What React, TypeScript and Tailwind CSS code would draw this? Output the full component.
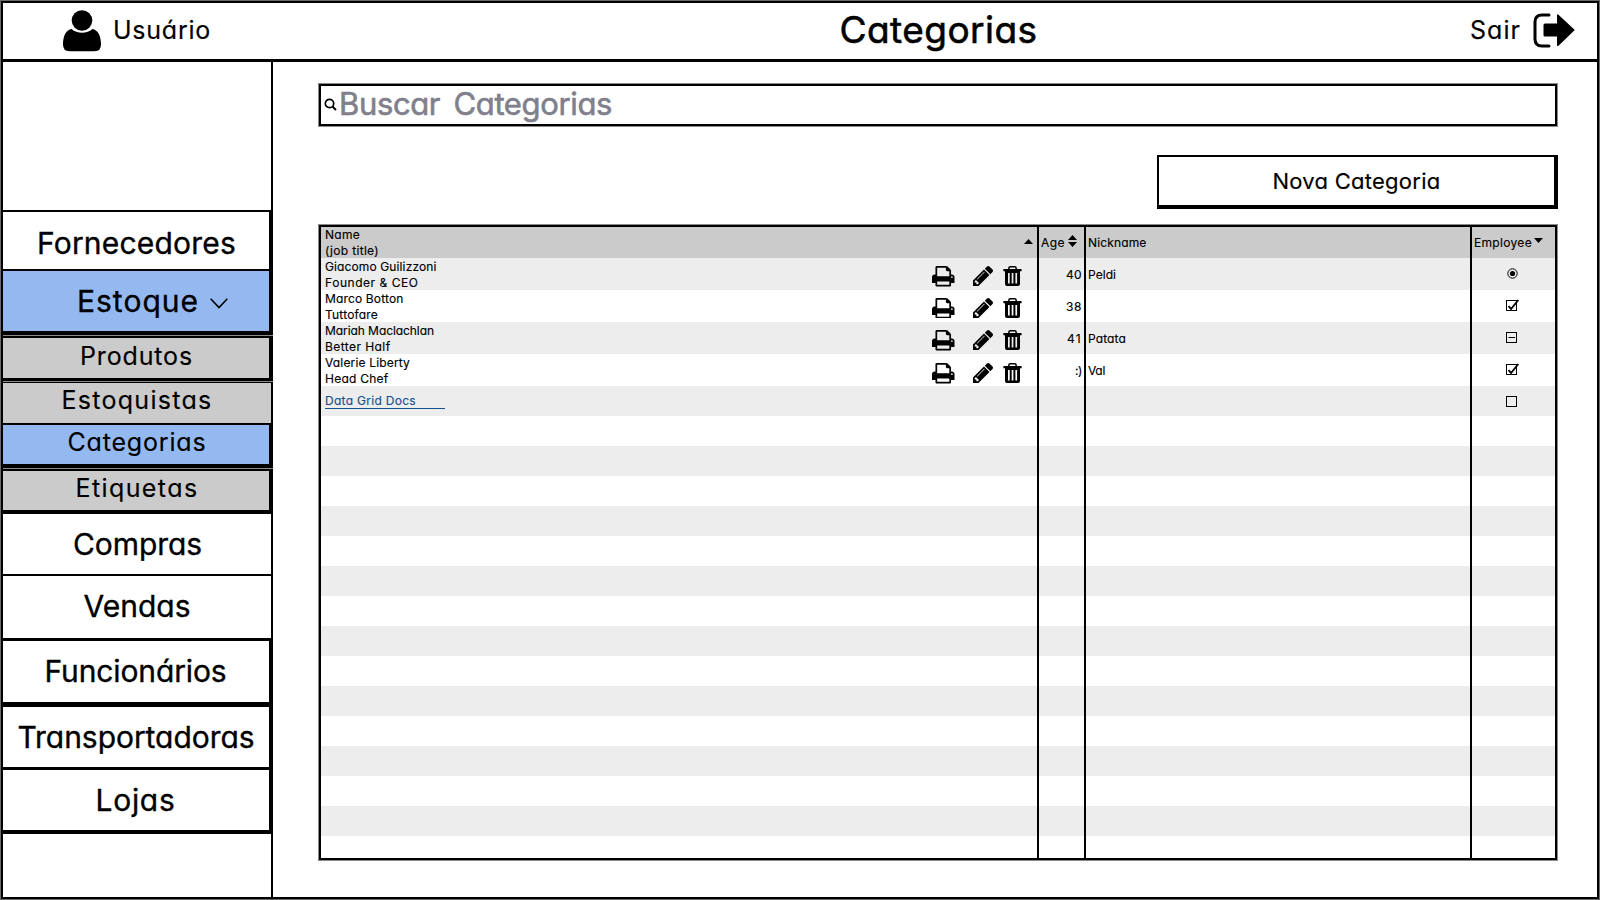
import { useLayoutEffect, useRef, useState } from "react";
import type { ReactNode } from "react";

type FitProps = { text: string; width: number; className?: string };

/** One line of text whose tracking is adjusted so that it spans `width` pixels. */
function Fit({ text, width, className = "" }: FitProps) {
  const ref = useRef<HTMLSpanElement>(null);
  const [spacing, setSpacing] = useState(0);
  useLayoutEffect(() => {
    const el = ref.current;
    if (!el) return;
    const natural = el.getBoundingClientRect().width - spacing * text.length;
    setSpacing((width - natural) / text.length);
  }, [text, width]);
  return (
    <span ref={ref} className={`inline-block whitespace-pre ${className}`} style={{ letterSpacing: `${spacing}px` }}>
      {text}
    </span>
  );
}

const PRINT =
  "M448 1536h896v-256h-896v256zm0-640h896v-384h-160q-40 0-68-28t-28-68v-160h-640v640zm1152 64q0-26-19-45t-45-19-45 19-19 45 19 45 45 19 45-19 19-45zm128 0v416q0 13-9.5 22.5t-22.5 9.5h-224v160q0 40-28 68t-68 28h-960q-40 0-68-28t-28-68v-160h-224q-13 0-22.5-9.5t-9.5-22.5v-416q0-79 56.5-135.5t135.5-56.5h64v-544q0-40 28-68t68-28h672q40 0 88 20t76 48l152 152q28 28 48 76t20 88v256h64q79 0 135.5 56.5t56.5 135.5z";
const PENCIL =
  "M491 1536l91-91-235-235-91 91v107h128v128h107zm523-928q0-22-22-22-10 0-17 7l-542 542q-7 7-7 17 0 22 22 22 10 0 17-7l542-542q7-7 7-17zm-54-192l416 416-832 832h-416v-416zm683 96q0 53-37 90l-166 166-416-416 166-165q36-38 90-38 53 0 91 38l235 234q37 39 37 91z";

function PrintIcon() {
  return (
    <svg className="h-[20.5px] w-[22.5px]" viewBox="64 128 1664 1536" preserveAspectRatio="none">
      <path d={PRINT} />
    </svg>
  );
}

function PencilIcon() {
  return (
    <svg className="size-5" viewBox="128 149 1515 1515">
      <path d={PENCIL} />
    </svg>
  );
}

function TrashIcon() {
  return (
    <svg className="h-5 w-[19px]" viewBox="0 0 19 20">
      <path d="M5.8 3.6V2.4Q5.8.8 7.4.8h4.2q1.6 0 1.6 1.6v1.2" fill="none" stroke="#000" strokeWidth="1.5" />
      <path d="M1 3h17q.6 0 .6.6v1.6H.4V3.600Q.4 3 1 3z" />
      <path
        fillRule="evenodd"
        d="M2 5h15v13q0 2-2 2H4q-2 0-2-2zM5 7v10.500h1.700V7zM8.700 7v10.500h1.700V7zM12.400 7v10.500h1.700V7z"
      />
    </svg>
  );
}

function UserIcon() {
  return (
    <svg className="h-[42px] w-[38px]" viewBox="0 0 38 42">
      <circle cx="19" cy="10.500" r="10.300" />
      <path d="M8.500 19Q13 22.800 19 22.800T29.500 19C35 20 38 26 38 34.500Q38 41.300 31.500 41.300h-25Q0 41.300 0 34.500C0 26 3 20 8.500 19z" />
    </svg>
  );
}

function ExitIcon() {
  return (
    <svg className="mb-px h-[35px] w-[43px]" viewBox="0 0 43 35">
      <path d="M16 2H9Q2 2 2 9v17q0 7 7 7h7" fill="none" stroke="#000" strokeWidth="3" strokeLinecap="round" />
      <path d="M12 10.500h12V2.500q0-2 1.500-.7L41.800 17 25.500 32.800q-1.500 1-1.500-.8v-8.500H12q-1.500 0-1.500-1.500V12q0-1.500 1.500-1.500z" />
    </svg>
  );
}

function Up({ className = "" }: { className?: string }) {
  return (
    <svg className={`h-[5px] w-[9px] ${className}`} viewBox="0 0 9 5">
      <path d="M4.500 0 9 5H0z" />
    </svg>
  );
}

function Down({ className = "" }: { className?: string }) {
  return (
    <svg className={`h-[5px] w-[9px] ${className}`} viewBox="0 0 9 5">
      <path d="M4.500 5 9 0H0z" />
    </svg>
  );
}

type Mark = "radio" | "check" | "minus" | "empty";

function Marker({ mark }: { mark: Mark }) {
  return (
    <svg className="h-[14px] w-[14px]" viewBox="0 0 14 14" fill="none" stroke="#000">
      {mark === "radio" ? (
        <>
          <circle cx="6.500" cy="6.500" r="4.700" />
          <circle cx="6.500" cy="6.500" r="2.600" fill="#000" stroke="none" />
        </>
      ) : (
        <rect x="0.500" y="1.500" width="10" height="10" />
      )}
      {mark === "minus" && <path d="M2.500 6.500h6.500" />}
      {mark === "check" && <path d="M2.500 7 5 10 12.300 1" strokeWidth="1.900" />}
    </svg>
  );
}

type NavItem = { label: string; width: number; box: string; text: string; open?: boolean };

const main = "text-[30px] [-webkit-text-stroke:0.35px_black]";
const sub = "text-[25px] [-webkit-text-stroke:0.15px_black]";

const nav: NavItem[] = [
  { label: "Fornecedores", width: 199, box: "h-[59px] border-r-4 border-b-2 bg-white pt-[5px]", text: main },
  { label: "Estoque", width: 122, box: "h-[64px] border-r-4 border-b-4 bg-[#94b9f1] pl-[25px]", text: main, open: true },
  { label: "Produtos", width: 113, box: "mt-px h-[45px] border-t-2 border-r-4 border-b-3 bg-[#cbcbcb] pb-[3px]", text: sub },
  { label: "Estoquistas", width: 151, box: "mt-px h-[43px] border-t border-b-2 border-r-2 bg-[#cbcbcb] pr-px pb-1", text: sub },
  { label: "Categorias", width: 139, box: "h-[43px] border-r-4 border-b-4 bg-[#94b9f1] pb-[4px] pl-px", text: sub },
  { label: "Etiquetas", width: 123, box: "mt-px h-[45px] border-t-2 border-r-4 border-b-4 bg-[#cbcbcb] pb-[4px] pl-px", text: sub },
  { label: "Compras", width: 129, box: "h-[62px] border-r-2 border-b-2 bg-white", text: main },
  { label: "Vendas", width: 107, box: "h-[65px] border-r-2 border-b-3 bg-white pr-px pb-px", text: main },
  { label: "Funcionários", width: 182, box: "h-[66px] border-r-4 border-b-5 bg-white pr-[2px]", text: main },
  { label: "Transportadoras", width: 237, box: "h-[63px] border-r-4 border-b-3 bg-white pr-px", text: main },
  { label: "Lojas", width: 80, box: "h-[64px] border-r-4 border-b-4 bg-white pr-[2px]", text: main },
];

type Row = {
  name: [string, number];
  job: [string, number];
  age: [string, number];
  nick?: [string, number];
  mark: Mark;
  icons: string;
};

const rows: Row[] = [
  { name: ["Giacomo Guilizzoni", 111.5], job: ["Founder & CEO", 93.5], age: ["40", 16], nick: ["Peldi", 28], mark: "radio", icons: "pt-2" },
  { name: ["Marco Botton", 78.5], job: ["Tuttofare", 53], age: ["38", 16], mark: "check", icons: "pt-[7.5px]" },
  { name: ["Mariah Maclachlan", 109], job: ["Better Half", 65.5], age: ["41", 15], nick: ["Patata", 38], mark: "minus", icons: "pt-2" },
  { name: ["Valerie Liberty", 85], job: ["Head Chef", 63.5], age: [":)", 7], nick: ["Val", 17], mark: "check", icons: "pt-[9px]" },
];

const columns = "grid grid-cols-[716px_47px_386px_85px]";

function Cell({ children, className = "" }: { children?: ReactNode; className?: string }) {
  return <div className={`flex border-l-2 border-black ${className}`}>{children}</div>;
}

function DataGrid() {
  return (
    <div className="mx-px flex h-[635px] w-[1238px] flex-col border-2 border-black text-xs shadow-[0_0_0_1px_#8a8a8a] [-webkit-text-stroke:0.15px]">
      <div className={`${columns} h-[31px] shrink-0 bg-[#cbcbcb]`}>
        <div className="flex items-center justify-between pr-1 pl-1">
          <div className="flex flex-col items-start leading-4">
            <Fit text="Name" width={35} />
            <Fit text="(job title)" width={54} />
          </div>
          <Up className="mb-[3px]" />
        </div>
        <Cell className="items-center pl-0.5">
          <Fit text="Age" width={24} />
          <div className="mb-[5px] ml-[3px] flex flex-col gap-0.5">
            <Up />
            <Down />
          </div>
        </Cell>
        <Cell className="items-center pl-0.5">
          <Fit text="Nickname" width={58.5} />
        </Cell>
        <Cell className="items-center pl-0.5">
          <Fit text="Employee" width={58} />
          <Down className="mb-[5px] ml-0.5" />
        </Cell>
      </div>

      {rows.map((row) => (
        <div key={row.name[0]} className={`${columns} h-8 shrink-0 odd:bg-white even:bg-[#ededed]`}>
          <div className="flex justify-between pr-[15.500px] pl-1">
            <div className="flex flex-col items-start pt-px leading-4">
              <Fit text={row.name[0]} width={row.name[1]} />
              <Fit text={row.job[0]} width={row.job[1]} />
            </div>
            <div className={`flex items-start ${row.icons}`}>
              <PrintIcon />
              <span className="w-[18.500px]" />
              <PencilIcon />
              <span className="w-[9.500px]" />
              <TrashIcon />
            </div>
          </div>
          <Cell className="items-start justify-end pt-2 pr-0.5 leading-4">
            <Fit text={row.age[0]} width={row.age[1]} className="mt-px" />
          </Cell>
          <Cell className="items-start pt-2 pl-0.5 leading-4">
            {row.nick && <Fit text={row.nick[0]} width={row.nick[1]} className="mt-px" />}
          </Cell>
          <Cell className="items-start pt-[9px] pl-[34px]">
            <Marker mark={row.mark} />
          </Cell>
        </div>
      ))}

      <div className={`${columns} h-[30px] shrink-0 bg-[#ededed]`}>
        <div className="flex items-center pb-px pl-1">
          <a className="flex h-[17px] w-[120px] items-start border-b border-[#15518f] text-[#15518f]">
            <Fit text="Data Grid Docs" width={91} className="mt-px leading-4" />
          </a>
        </div>
        <Cell />
        <Cell />
        <Cell className="items-center pt-0.5 pl-[34px]">
          <Marker mark="empty" />
        </Cell>
      </div>

      {Array.from({ length: 14 }, (_, i) => (
        <div key={i} className={`${columns} h-[30px] shrink-0 ${i % 2 ? "bg-[#ededed]" : "bg-white"}`}>
          <div />
          <Cell />
          <Cell />
          <Cell />
        </div>
      ))}
      <div className={`${columns} flex-1 bg-white`}>
        <div />
        <Cell />
        <Cell />
        <Cell />
      </div>
    </div>
  );
}

export default function App() {
  return (
    <div className="h-[900px] w-[1600px] overflow-hidden bg-[#6b6b6b] p-px font-['Inter','Liberation_Sans',sans-serif] text-black [font-feature-settings:'cv11']">
      <div className="flex h-full w-full flex-col border-2 border-black bg-white">
        <header className="flex h-[59px] shrink-0 items-center border-b-3 border-black">
          <div className="flex w-[271px] items-center gap-[12px] pl-[60px]">
            <UserIcon />
            <Fit text="Usuário" width={98} className="text-[25px] [-webkit-text-stroke:0.15px_black]" />
          </div>
          <h1 className="flex flex-1 justify-center pb-[2px] pl-[133px]">
            <Fit text="Categorias" width={198} className="text-[37px] leading-[50px] [-webkit-text-stroke:0.6px_black]" />
          </h1>
          <div className="flex items-center gap-[12px] pr-[21px]">
            <Fit text="Sair" width={51} className="text-[25px] [-webkit-text-stroke:0.15px_black]" />
            <ExitIcon />
          </div>
        </header>

        <div className="flex min-h-0 flex-1">
          <aside className="flex w-[270px] shrink-0 flex-col border-r-2 border-black">
            <div className="h-[150px] shrink-0 border-b-2 border-black" />
            <nav className="-mr-0.5 flex flex-col bg-[#8a8a8a]">
              {nav.map((item) => (
                <a key={item.label} className={`flex shrink-0 items-center justify-center border-black ${item.box}`}>
                  <Fit text={item.label} width={item.width} className={`ml-px ${item.text}`} />
                  {item.open && (
                    <svg className="mt-1 -mr-[7px] ml-[11px] h-[11px] w-[18px]" viewBox="0 0 18 11" fill="none" stroke="#000" strokeWidth="1.600">
                      <path d="M.7.800 9 9.600 17.300.8" />
                    </svg>
                  )}
                </a>
              ))}
            </nav>
          </aside>

          <main className="flex flex-1 flex-col pt-[21px] pl-[45px]">
            <div className="mx-px mt-px flex h-[42px] w-[1238px] shrink-0 items-center border-2 border-black pb-[2px] pl-[3px] shadow-[0_0_0_1px_#8a8a8a]">
              <svg className="mt-px size-[13px]" viewBox="0 0 13 13" fill="none" stroke="#000" strokeWidth="1.700">
                <circle cx="5.500" cy="5.500" r="4.200" />
                <path d="m8.500 8.500 3.500 3.500" strokeWidth="1.900" />
              </svg>
              <Fit
                text="Buscar Categorias"
                width={273}
                className="ml-[2px] text-[31px] leading-[36px] text-[#80808c] [word-spacing:5px] [-webkit-text-stroke:0.6px_#80808c]"
              />
            </div>
            <button className="mt-[29px] ml-[839px] flex h-[54px] w-[401px] shrink-0 items-center justify-center border-2 border-r-4 border-b-4 border-black">
              <Fit text="Nova Categoria" width={168} className="text-[22px] [-webkit-text-stroke:0.15px_black]" />
            </button>
            <div className="mt-4">
              <DataGrid />
            </div>
          </main>
        </div>
      </div>
    </div>
  );
}
